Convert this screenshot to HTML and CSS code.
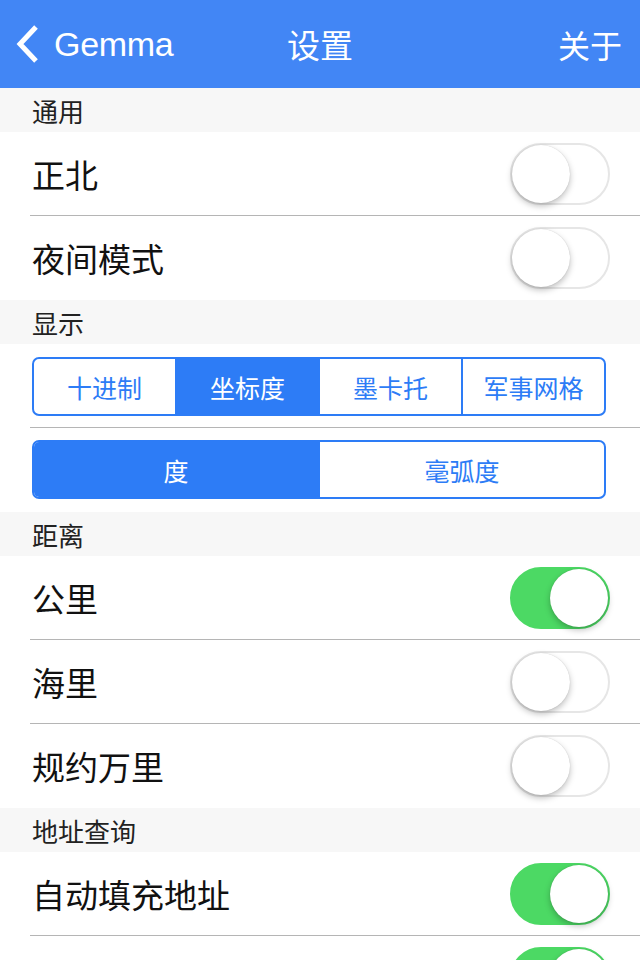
FILE: index.html
```html
<!DOCTYPE html>
<html lang="zh-CN">
<head>
    <meta charset="UTF-8">
    <meta name="viewport" content="width=device-width, initial-scale=1.0">
    <title>设置</title>
    <link rel="stylesheet" href="styles.css">
</head>
<body>
    <div class="navbar">
        <div class="nav-back">
            <svg class="chevron" width="26" height="40" viewBox="0 0 26 40">
                <path d="M22 3 L6 20 L22 37" fill="none" stroke="#fff" stroke-width="5" stroke-linecap="butt" stroke-linejoin="miter"/>
            </svg>
            <span class="nav-back-text">Gemma</span>
        </div>
        <div class="nav-title">设置</div>
        <div class="nav-right">关于</div>
    </div>

    <div class="section-header">通用</div>
    <div class="row">
        <span class="row-label">正北</span>
        <div class="toggle"><div class="knob"></div></div>
    </div>
    <div class="row last">
        <span class="row-label">夜间模式</span>
        <div class="toggle"><div class="knob"></div></div>
    </div>

    <div class="section-header">显示</div>
    <div class="seg-row">
        <div class="segmented">
            <div class="seg">十进制</div>
            <div class="seg active">坐标度</div>
            <div class="seg">墨卡托</div>
            <div class="seg">军事网格</div>
        </div>
    </div>
    <div class="seg-row last">
        <div class="segmented">
            <div class="seg active">度</div>
            <div class="seg">毫弧度</div>
        </div>
    </div>

    <div class="section-header">距离</div>
    <div class="row">
        <span class="row-label">公里</span>
        <div class="toggle on"><div class="knob"></div></div>
    </div>
    <div class="row">
        <span class="row-label">海里</span>
        <div class="toggle"><div class="knob"></div></div>
    </div>
    <div class="row last">
        <span class="row-label">规约万里</span>
        <div class="toggle"><div class="knob"></div></div>
    </div>

    <div class="section-header">地址查询</div>
    <div class="row">
        <span class="row-label">自动填充地址</span>
        <div class="toggle on"><div class="knob"></div></div>
    </div>
    <div class="row">
        <span class="row-label"></span>
        <div class="toggle on"><div class="knob"></div></div>
    </div>
</body>
</html>
```

FILE: styles.css
```css
* { box-sizing: border-box; }
body { margin: 0; background: #fff; font-family: "Liberation Sans", "Noto Sans CJK SC", sans-serif; color: #111; overflow: hidden; height: 960px; }
.navbar { height: 88px; background-color: #4286f5; color: #fff; display: flex; align-items: center; justify-content: space-between; padding: 0 18px 0 14px; position: relative; }
.nav-back { display: flex; align-items: center; gap: 14px; }
.chevron { display: block; }
.nav-back-text { font-size: 34px; letter-spacing: -0.3px; }
.nav-title { position: absolute; left: 0; right: 0; text-align: center; font-size: 33px; pointer-events: none; }
.nav-right { font-size: 32px; }
.section-header { height: 44px; background: #f7f7f7; display: flex; align-items: center; padding-left: 32px; font-size: 26px; color: #222; }
.row { height: 84px; margin-left: 30px; border-bottom: 1px solid #b5b5b5; display: flex; align-items: center; justify-content: space-between; padding-right: 30px; }
.row.last, .seg-row.last { border-bottom: none; }
.row-label { font-size: 33px; padding-left: 2px; }
.toggle { width: 100px; height: 62px; border: 2px solid #e6e6e6; border-radius: 31px; background: #fff; position: relative; }
.toggle .knob { position: absolute; top: 0; left: 0; width: 58px; height: 58px; border-radius: 50%; background: #fff; box-shadow: 0 3px 6px rgba(0, 0, 0, 0.25), 0 0 1px rgba(0, 0, 0, 0.2); }
.toggle.on { background: #4cd964; border-color: #4cd964; }
.toggle.on .knob { left: 38px; }
.seg-row { height: 84px; margin-left: 30px; padding: 13px 34px 0 2px; border-bottom: 1px solid #b5b5b5; }
.seg-row.last { padding-top: 12px; }
.segmented { display: flex; height: 59px; border: 2px solid #2d7cf6; border-radius: 7px; overflow: hidden; }
.seg { flex: 1; display: flex; align-items: center; justify-content: center; font-size: 25px; color: #2d7cf6; border-left: 2px solid #2d7cf6; }
.seg:first-child { border-left: none; }
.seg.active { background: #2d7cf6; color: #fff; }
```
